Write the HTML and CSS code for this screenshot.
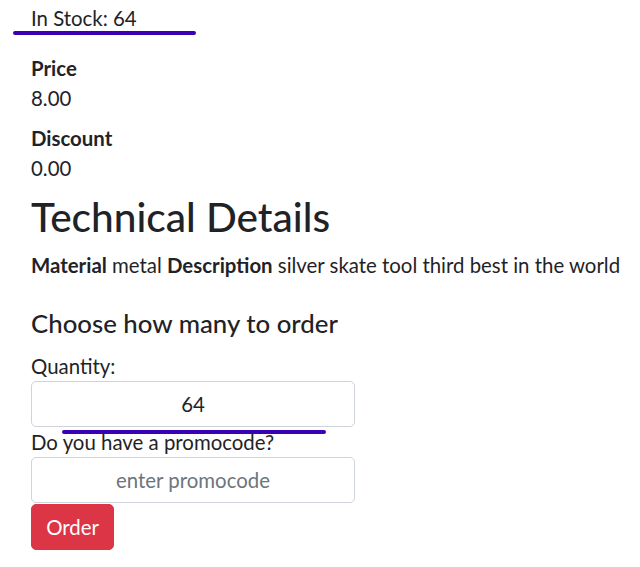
FILE: index.html
```html
<!DOCTYPE html>
<html lang="en">
<head>
<meta charset="utf-8">
<title>Product</title>
<link rel="stylesheet" href="styles.css">
</head>
<body>
<main class="page">
  <p class="stock">In Stock: 64</p>
  <dl class="facts">
    <dt>Price</dt>
    <dd>8.00</dd>
    <dt>Discount</dt>
    <dd>0.00</dd>
  </dl>
  <h1 class="title">Technical Details</h1>
  <p class="details"><b>Material</b> metal <b>Description</b> silver skate tool third best in the world</p>
  <h4 class="subtitle">Choose how many to order</h4>
  <form class="order-form">
    <label class="label" for="qty">Quantity:</label>
    <input class="control" id="qty" type="text" value="64">
    <label class="label" for="promo">Do you have a promocode?</label>
    <input class="control" id="promo" type="text" placeholder="enter promocode">
    <button class="btn" type="button">Order</button>
  </form>
  <span class="mark mark-stock"></span>
  <span class="mark mark-qty"></span>
</main>
</body>
</html>
```
FILE: styles.css
```css
* { box-sizing: border-box; }
html, body { margin: 0; padding: 0; background: #fff; }
body {
  font-family: "Segoe UI", Lato, "Noto Sans", sans-serif;
  font-size: 20.4px;
  line-height: 30px;
  color: #1f2327;
}
.page {
  position: relative;
  padding: 3px 0 0 31px;
  width: 640px;
  min-height: 567px;
}
.stock { margin: 0 0 20px; }
.facts { margin: 0; }
.facts dt { font-weight: 700; }
.facts dd { margin: 0 0 10px; }
.title {
  margin: 0 0 9px;
  font-size: 40.6px;
  line-height: 48px;
  font-weight: 500;
}
.details { margin: 0 0 28px; }
.details b { font-weight: 700; }
.subtitle {
  margin: 0 0 13px;
  font-size: 25.8px;
  line-height: 30px;
  font-weight: 500;
}
.order-form { display: flex; flex-direction: column; align-items: flex-start; }
.label { display: block; }
.control {
  display: block;
  width: 324px;
  height: 46px;
  padding: 7px 12px;
  font: inherit;
  color: #212529;
  text-align: center;
  border: 1px solid #ced4da;
  border-radius: 5px;
  background: #fff;
}
.control::placeholder { color: #6c757d; opacity: 1; }
.btn {
  margin-top: 1px;
  width: 83px;
  height: 46px;
  font: inherit;
  color: #fff;
  background: #dc3545;
  border: 1px solid #dc3545;
  border-radius: 5px;
  padding: 0;
}
.mark {
  position: absolute;
  height: 4px;
  border-radius: 2px;
  background: #3a00b4;
}
.mark-stock { left: 13px; top: 31px; width: 183px; }
.mark-qty { left: 62px; top: 430px; width: 264px; }
```
